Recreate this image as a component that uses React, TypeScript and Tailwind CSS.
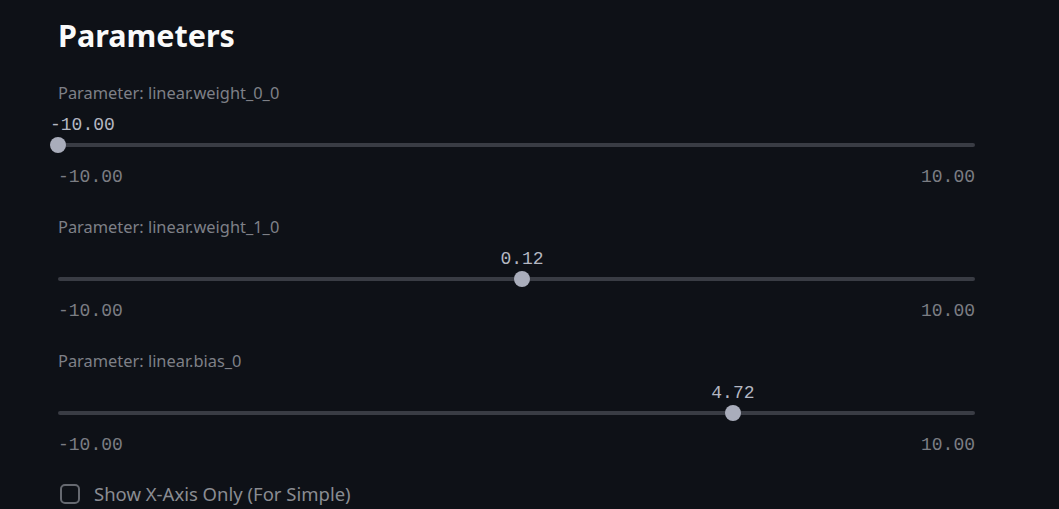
import React from 'react';

type Param = {
  name: string;
  value: number;
};

const params: Param[] = [
  { name: 'linear.weight_0_0', value: -10 },
  { name: 'linear.weight_1_0', value: 0.12 },
  { name: 'linear.bias_0', value: 4.72 },
];

const MIN = -10;
const MAX = 10;

function ParamSlider({ param }: { param: Param }) {
  const pct = ((param.value - MIN) / (MAX - MIN)) * 100;
  const atStart = pct <= 0;

  return (
    <div className="flex flex-col">
      <div className="h-[20px] text-[16.4px] leading-[20px] text-[#7e8087]">Parameter: {param.name}</div>
      <div className="relative h-[62px]">
        <div className="absolute left-0 right-0 top-[40px] h-[4px] rounded-full bg-[#393c44]" />
        <div
          className="absolute top-[42px] h-[16px] w-[16px] -translate-x-1/2 -translate-y-1/2 rounded-full bg-[#a9adbb]"
          style={{ left: `${pct}%` }}
        />
        <div
          className={
            atStart
              ? 'absolute -left-[8px] top-[11px] text-[18px] leading-[22px] text-[#b4b7c2] [font-family:"Liberation_Mono",monospace]'
              : 'absolute top-[11px] -translate-x-1/2 text-[18px] leading-[22px] text-[#b4b7c2] [font-family:"Liberation_Mono",monospace]'
          }
          style={atStart ? undefined : { left: `${pct}%` }}
        >
          {param.value.toFixed(2)}
        </div>
      </div>
      <div className="flex h-[24px] justify-between text-[18px] leading-[24px] text-[#7b7d83] [font-family:'Liberation_Mono',monospace]">
        <span>{MIN.toFixed(2)}</span>
        <span>{MAX.toFixed(2)}</span>
      </div>
    </div>
  );
}

export default function App() {
  return (
    <div className="h-[509px] overflow-hidden bg-[#0e1117] [font-family:'Noto_Sans','Open_Sans',sans-serif]">
      <div className="ml-[58px] w-[917px] pt-[14px]">
        <h2 className="h-[42px] text-[30.5px] font-bold leading-[42px] text-[#fafafa]">Parameters</h2>
        <div className="mt-[27px] flex flex-col gap-[28px]">
          {params.map((p) => (
            <ParamSlider key={p.name} param={p} />
          ))}
        </div>
        <label className="mt-[25px] flex h-[24px] items-center gap-[14px]">
          <span className="ml-[2px] h-[20px] w-[20px] rounded-[5px] border-2 border-[#666970]" />
          <span className="text-[18.5px] leading-[24px] text-[#8a8c92]">Show X-Axis Only (For Simple)</span>
        </label>
      </div>
    </div>
  );
}
